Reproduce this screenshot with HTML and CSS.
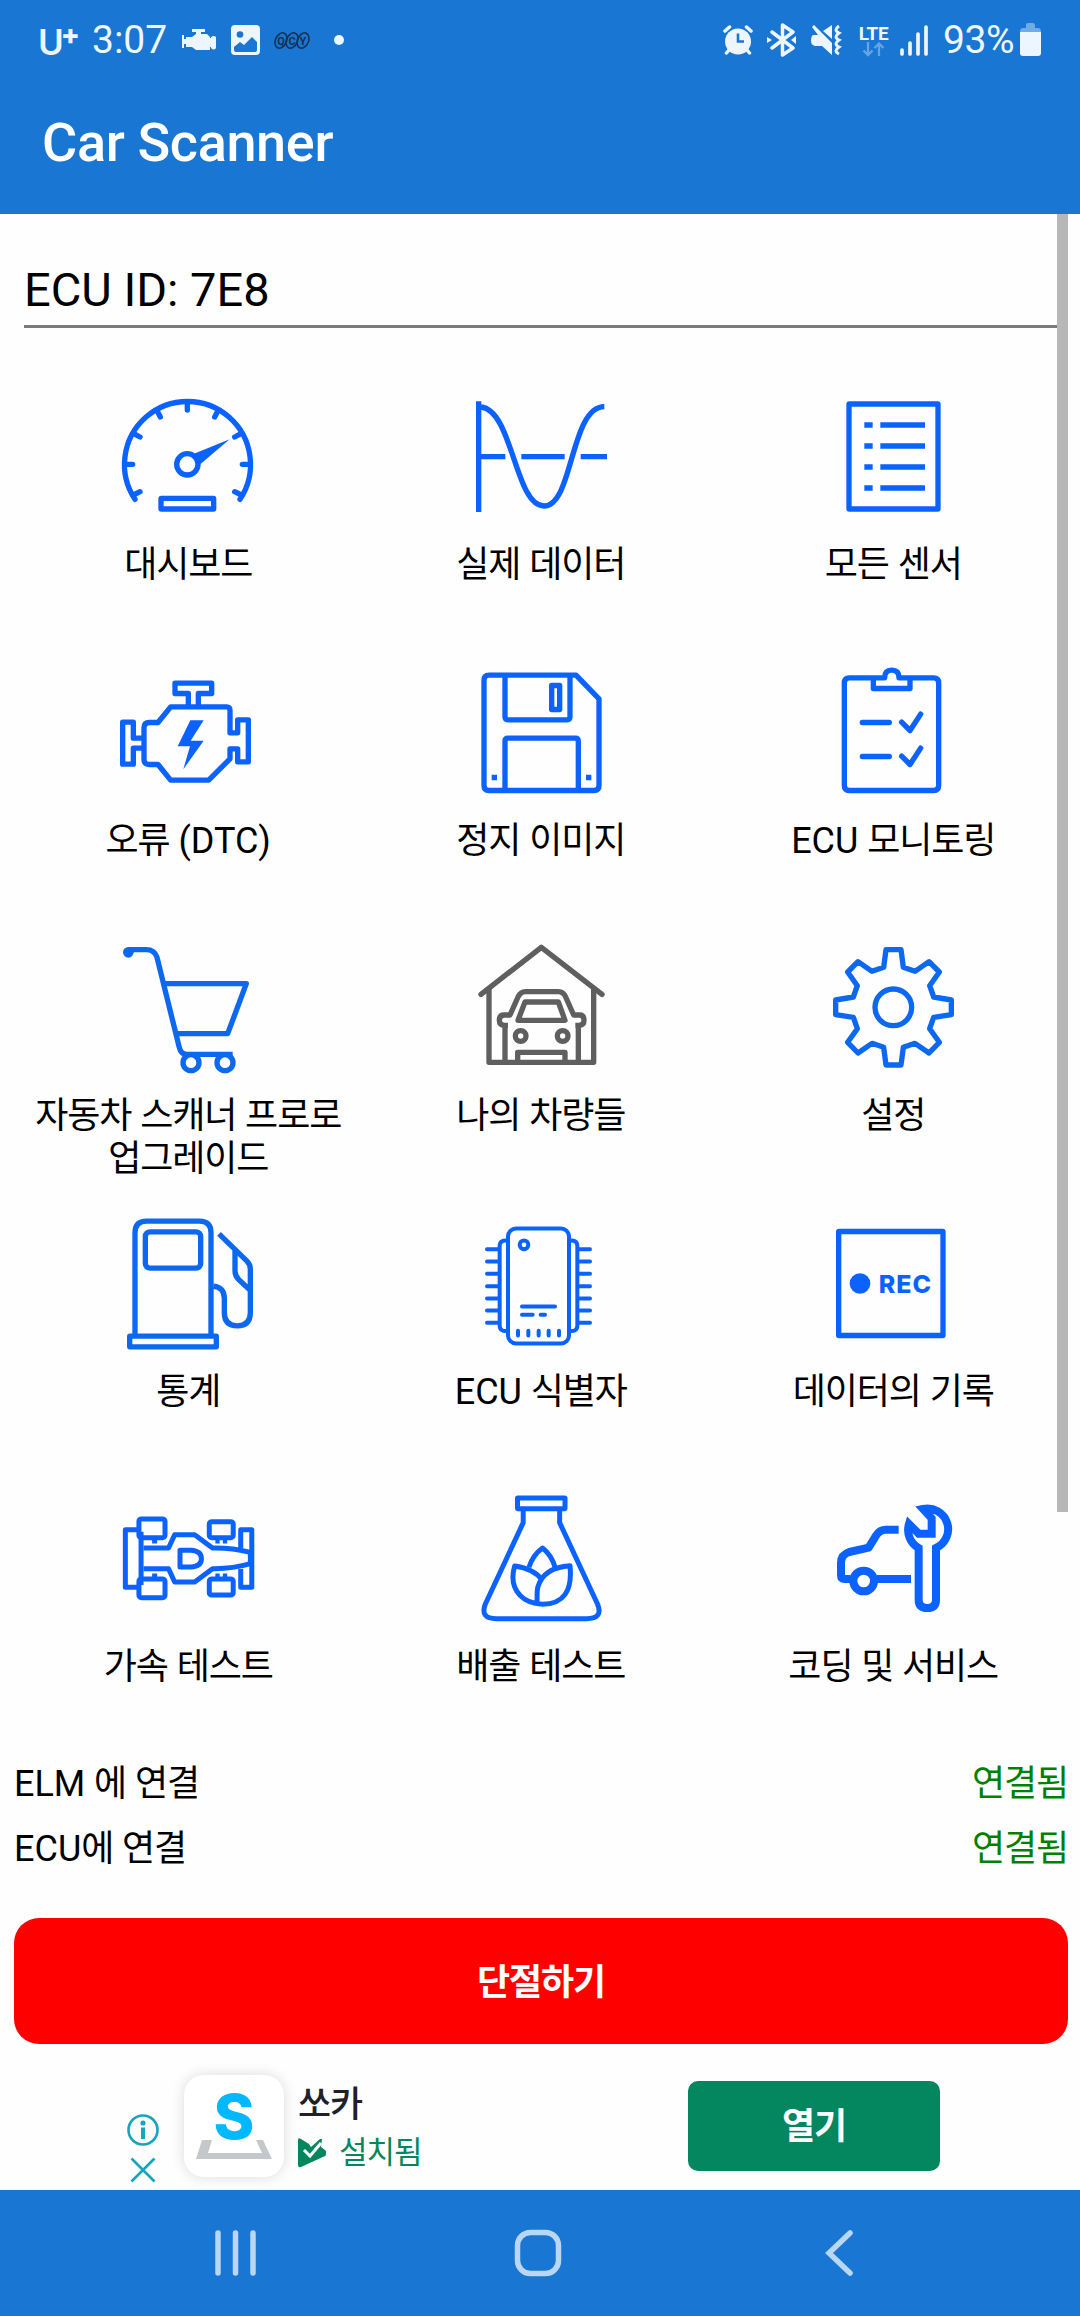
FILE: index.html
```html
<!DOCTYPE html>
<html lang="ko">
<head>
  <meta charset="UTF-8">
  <title>Car Scanner</title>
  <link rel="stylesheet" href="styles.css">
</head>
<body>
  <header class="app-header">
    <!-- status bar -->
    <div class="status-bar">
      <div class="status-left">
        <span class="carrier">U<sup>+</sup></span>
        <span class="clock">3:07</span>
        <svg class="st-engine" width="34" height="22" viewBox="0 0 34 22"><path fill="currentColor" d="M10 0h13v3h-4v2h6l3 3v1h1V8q3-2 5 0v11q-2 3-5 0v-1h-1v3H14l-4-3H4v-3H2v4H0V6h2v4h2V8h6l4-3V3h-4z"/></svg>
        <svg class="st-photo" width="29" height="30" viewBox="0 0 29 30"><rect width="29" height="30" rx="4" fill="currentColor"/><circle cx="9" cy="9.500" r="3.300" fill="#1976d2"/><path fill="#1976d2" d="M3 22l6-5 4 3 8-8 5 5v8q0 2-2 2H5q-2 0-2-2z"/></svg>
        <svg class="st-qcy" width="36" height="17" viewBox="0 0 36 17"><g fill="none" stroke="#14304f" stroke-width="1.500"><ellipse cx="7" cy="8.500" rx="5.500" ry="8" transform="rotate(25 7 8.500)"/><ellipse cx="18" cy="8.500" rx="5.500" ry="8" transform="rotate(25 18 8.500)"/><ellipse cx="29" cy="8.500" rx="5.500" ry="8" transform="rotate(25 29 8.500)"/></g><g class="qcy-text"><text x="7" y="12.500">Q</text><text x="18" y="12.500">C</text><text x="29" y="12.500">Y</text></g></svg>
        <span class="st-dot"></span>
      </div>
      <div class="status-right">
        <svg width="30" height="30" viewBox="0 0 30 30"><circle cx="15" cy="16.500" r="13" fill="currentColor"/><path d="M2 6l4.500-4M28 6l-4.500-4M6 25l-2.500 3M24 25l2.500 3" stroke="currentColor" stroke-width="3.500" stroke-linecap="round"/><path d="M15 8.500v8h6" fill="none" stroke="#1976d2" stroke-width="2.600"/></svg>
        <svg class="st-bt" width="30" height="34" viewBox="0 0 30 34"><path d="M5 9l21 16-10.500 7V2L26 9 5 25" fill="none" stroke="currentColor" stroke-width="3.500" stroke-linejoin="round" stroke-linecap="round"/><path fill="currentColor" d="M0 14l5 3-5 3zM29 13v8l-5-4z"/></svg>
        <svg class="st-mute" width="31" height="31" viewBox="0 0 31 31"><path fill="currentColor" d="M2 10h5L1 2 3 0l18 18v12l-10-9H4q-4-1-4-5 0-5 2-6zM12 6l9-6v14z"/><path d="M28 1q-6 4 0 7-6 4 0 7-6 4 0 7-6 4 0 7" fill="none" stroke="currentColor" stroke-width="3"/></svg>
        <div class="lte"><span>LTE</span><svg width="24" height="15" viewBox="0 0 24 15"><path d="M6 0v13M1.500 8.500L6 13l4.500-4.500M17 14V1.500M12.500 6L17 1.500 21.500 6" fill="none" stroke="#66a5e3" stroke-width="2.300"/></svg></div>
        <svg class="st-signal" width="28" height="31" viewBox="0 0 28 31"><path d="M2 25v4M10 18v11M18 9v20M26 2v27" stroke="currentColor" stroke-width="3.700" stroke-linecap="round"/></svg>
        <span class="battery-text">93%</span>
        <svg class="st-battery" width="21" height="34" viewBox="0 0 21 34"><path fill="#71abe5" d="M6 2q0-2 2-2h5q2 0 2 2v3h3q3 0 3 4H0q0-4 3-4h3z"/><path fill="currentColor" d="M0 9h21v21q0 3-3 3H3q-3 0-3-3z"/></svg>
      </div>
    </div>
    <h1>Car Scanner</h1>
  </header>

  <main>
    <div class="scrollbar"></div>
    <div class="ecu-picker">ECU ID: 7E8</div>

    <div class="menu">
      <div class="menu-item">
        <svg class="icon" viewBox="348 48 432 432">
          <path d="M405 388A189 189 0 1 1 720 388" stroke-linecap="round"/>
          <path d="M562 100v20M472 124l9 17M653 124l-9 17M400 190l20 11M724 190l-20 11M380 283h18M745 283h-18M400 375l20-10M724 375l-20-10" stroke-linecap="round"/>
          <circle cx="562" cy="283" r="32"/>
          <path class="solid" d="M582 251L689 208 598 285z"/>
          <rect x="483" y="385" width="158" height="32" rx="1"/>
        </svg>
        <p>대시보드</p>
      </div>
      <div class="menu-item">
        <svg class="icon" viewBox="207 48 432 432">
          <path d="M236 94v332M244 260h72M364 260h130M542 260h79"/>
          <path d="M243 111C338 120 345 408 432 408 520 408 510 111 613 110"/>
        </svg>
        <p>실제 데이터</p>
      </div>
      <div class="menu-item">
        <svg class="icon" viewBox="243 48 432 432">
          <rect x="327" y="102" width="267" height="315" rx="1"/>
          <path d="M373 165h25M421 165h134M373 228h25M421 228h134M373 291h25M421 291h134M373 354h25M421 354h134"/>
        </svg>
        <p>모든 센서</p>
      </div>

      <div class="menu-item">
        <svg class="icon" viewBox="348 874.5 432 432">
          <path d="M565 1008v-39h-40v-31h110v31h-40v39"/>
          <path d="M512 1009h168q10 0 10 10v68h23v-39h32v126h-32v-39h-23v30l-64 64H512l-38-47h-26q-16 0-16-16v-94q0-16 16-16h26z"/>
          <path d="M432 1103h-32v-48h-32v126h32v-48h32"/>
          <path class="solid" d="M571 1049h40l-39 62h39l-61 85 20-69h-37z"/>
        </svg>
        <p>오류 <span class="latin">(DTC)</span></p>
      </div>
      <div class="menu-item">
        <svg class="icon" viewBox="207 874.5 432 432">
          <path d="M267 914h261l69 71v260q0 15-15 15H267q-15 0-15-15V929q0-15 15-15z"/>
          <path d="M315 914v125q0 9 9 9h177q9 0 9-9V914M315 1260v-148q0-9 9-9h202q9 0 9 9v148"/>
          <rect x="455" y="945" width="24" height="72"/>
          <path d="M275 1221h16M558 1221h16"/>
        </svg>
        <p>정지 이미지</p>
      </div>
      <div class="menu-item">
        <svg class="icon" viewBox="243 874.5 432 432">
          <path d="M434 922H328q-15 0-15 15v308q0 15 15 15h253q15 0 15-15V937q0-15-15-15H477q0-23-22-23-21 0-21 23z"/>
          <path d="M400 922v32h110v-32"/>
          <path d="M367 1056h81M367 1158h81M485 1055l25 25 32-49M485 1157l25 25 32-49" stroke-linecap="round"/>
        </svg>
        <p><span class="latin">ECU</span> 모니토링</p>
      </div>

      <div class="menu-item">
        <svg class="icon icon-alt" viewBox="348 51 432 432">
          <circle class="solid" cx="385" cy="97" r="16"/>
          <path d="M385 89h53q26 0 33 23l67 271q5 20 22 20h138" />
          <path d="M494 191h245l-56 150H530"/>
          <circle cx="573" cy="428" r="24"/><circle cx="675" cy="428" r="24"/>
        </svg>
        <p>자동차 스캐너 프로로<br>업그레이드</p>
      </div>
      <div class="menu-item">
        <svg class="icon icon-gray" viewBox="207 51 432 432">
          <path d="M243 223L424 82l182 141" stroke-linecap="round"/>
          <path d="M267 207v220h314V207"/>
          <path d="M315 420V317M535 420V317M324 316h-10q-16 0-16-15 0-16 14-16h18l24-54q8-16 22-16h99q15 0 22 16l24 54h18q13 0 13 16 0 15-16 15h-10"/>
          <path d="M375 246h100l20 55H354z"/>
          <circle cx="362" cy="348" r="16"/><circle cx="488" cy="348" r="16"/>
          <path d="M353 424v-27h142v27"/>
        </svg>
        <p>나의 차량들</p>
      </div>
      <div class="menu-item">
        <svg class="icon icon-alt" viewBox="243 51 432 432">
          <path d="M438 89h45l7 53 35 12 42-29 31 31-29 41 12 34 53 9v44l-53 8-12 34 29 41-31 32-42-29-35 12-7 53h-45l-7-53-35-12-42 29-31-32 29-41-12-34-53-8v-44l53-9 12-34-29-41 31-31 42 29 35-12z"/>
          <circle cx="460" cy="262" r="55"/>
        </svg>
        <p>설정</p>
      </div>

      <div class="menu-item">
        <svg class="icon icon-alt" viewBox="348 877.5 432 432">
          <path d="M405 1247V937q0-35 35-35h158q35 0 35 35v310"/>
          <rect x="436" y="934" width="166" height="109" rx="14"/>
          <rect x="389" y="1247" width="260" height="32" rx="1"/>
          <path d="M657 940l84 82q10 9 10 24v131q0 39-39 39t-39-39v-44q0-32-33-36M705 987v64q0 16 11 26l34 32"/>
        </svg>
        <p>통계</p>
      </div>
      <div class="menu-item">
        <svg class="icon icon-thin" viewBox="207 877.5 432 432">
          <rect x="324" y="924" width="183" height="345" rx="24"/>
          <path d="M324 961q-25-4-25 16v238q0 20 25 16M507 961q25-4 25 16v238q0 20-25 16"/>
          <g stroke-linecap="round">
            <path d="M261 986h34M261 1023h34M261 1060h34M261 1097h34M261 1134h34M261 1170h34M261 1207h34"/>
            <path d="M536 986h34M536 1023h34M536 1060h34M536 1097h34M536 1134h34M536 1170h34M536 1207h34"/>
            <path d="M366 1158h99M366 1183h32M422 1183h13M354 1231v14M385 1231v14M416 1231v14M446 1231v14M477 1231v14"/>
          </g>
          <circle cx="372" cy="973" r="13"/>
        </svg>
        <p><span class="latin">ECU</span> 식별자</p>
      </div>
      <div class="menu-item">
        <svg class="icon" viewBox="243 877.5 432 432">
          <rect x="296" y="933" width="313" height="312" rx="1"/>
          <circle class="solid" cx="360" cy="1089" r="31"/>
          <text class="rec" x="416" y="1116">REC</text>
        </svg>
        <p>데이터의 기록</p>
      </div>

      <div class="menu-item">
        <svg class="icon icon-wide" viewBox="100.8 54 403.2 432" preserveAspectRatio="none">
          <path d="M170 179h-43v173h43M171 185v160"/>
          <rect x="165" y="147" width="73" height="56" rx="7"/><rect x="165" y="327" width="73" height="56" rx="7"/>
          <rect x="362" y="155" width="67" height="48" rx="7"/><rect x="362" y="327" width="67" height="48" rx="7"/>
          <path d="M178 234h70l17-40h56l50 40q55-1 106 13v34q-51 16-106 15l-50 40h-56l-17-40h-70"/>
          <path d="M450 234v-55h31v173h-31v-55"/>
          <path d="M280 241h30q30 2 30 25t-30 25h-30z"/>
          <path d="M202 213h14M379 213h12M400 213h12M202 318h14M379 318h12M400 318h12"/>
        </svg>
        <p>가속 테스트</p>
      </div>
      <div class="menu-item">
        <svg class="icon icon-wide" viewBox="1089.2 54 403.2 432" preserveAspectRatio="none">
          <rect x="1225" y="84" width="133" height="32" rx="1"/>
          <path d="M1241 116v42l-106 244q-16 44 31 44h252q48 0 31-44L1343 158v-42"/>
          <path d="M1257 292q11-37 38-58 26 22 35 58"/>
          <path d="M1294 330q-23-34-77-42-15 55 16 89 20 23 62 26 88-2 77-116-75 6-90 64-3 12-2 49"/>
        </svg>
        <p>배출 테스트</p>
      </div>
      <div class="menu-item">
        <svg class="icon icon-bold" viewBox="243 54 432 432">
          <path d="M476 179h-38q-20 0-30 18l-22 36-58 13q-25 8-25 32v38q0 11 11 11h18M411 327h102"/>
          <circle cx="371" cy="333" r="31"/>
          <path class="wrench" d="M536 234v155q0 25 26 25t26-25V234A62 62 0 0 0 549 117L575 145V191H536L507 162A62 62 0 0 0 536 234z"/>
        </svg>
        <p>코딩 및 서비스</p>
      </div>
    </div>

    <!-- connection state -->
    <div class="connection">
      <div class="connection-row"><span><span class="latin">ELM</span> 에 연결</span><span class="ok">연결됨</span></div>
      <div class="connection-row"><span><span class="latin">ECU</span>에 연결</span><span class="ok">연결됨</span></div>
    </div>
    <button class="disconnect">단절하기</button>

    <!-- banner -->
    <div class="banner">
      <div class="ad-choices">
        <svg width="32" height="32" viewBox="0 0 32 32"><circle cx="16" cy="16" r="14.500"/><path d="M16 13.500V25" stroke-width="4"/><circle class="ad-dot" cx="16" cy="9" r="2.600"/></svg>
        <svg width="32" height="26" viewBox="0 0 32 26"><path d="M4.500 1.500l23 23M27.500 1.500l-23 23"/></svg>
      </div>
      <div class="ad-logo">
        <svg width="100" height="102" viewBox="0 0 100 102"><path fill="#c5c8cb" d="M18 65h10l-4 13h54l-6-13h7l9 19H12z"/><text class="ad-s" x="50" y="64">S</text></svg>
      </div>
      <div class="ad-text">
        <div class="ad-title">쏘카</div>
        <div class="ad-installed">
          <svg width="28" height="30" viewBox="0 0 28 30"><path fill="#04875f" d="M0 2q0-3 3-1l8 5 2 3 9-8h2l-1 8 4 3q3 3 0 6L3 29q-3 1-3-2z"/><path d="M6 12l6 6L23 5" fill="none" stroke="#fff" stroke-width="3"/></svg>
          <span>설치됨</span>
        </div>
      </div>
      <button class="ad-open">열기</button>
    </div>
  </main>

  <nav class="nav-bar">
    <svg class="nav-recent" width="41" height="46" viewBox="0 0 41 46"><path d="M3 3v40M20.500 3v40M38 3v40"/></svg>
    <svg class="nav-home" width="48" height="48" viewBox="0 0 48 48"><rect x="3.500" y="3.500" width="41" height="41" rx="13"/></svg>
    <svg class="nav-back" width="30" height="48" viewBox="0 0 30 48"><path d="M26 4L5 24l21 20"/></svg>
  </nav>
</body>
</html>
```
FILE: styles.css
```css
* {
  box-sizing: border-box;
}
body {
  margin: 0;
  width: 1080px;
  height: 2316px;
  display: flex;
  flex-direction: column;
  background: #fefefe;
  color: #000;
  font-family: Roboto, "Noto Sans CJK KR", sans-serif;
  overflow: hidden;
}
.app-header {
  height: 214px;
  background: #1976d2;
  color: #fff;
}
.app-header h1 {
  margin: 33px 0 0 42px;
  font-size: 54px;
  font-weight: 500;
  line-height: 64px;
  letter-spacing: -0.35px;
}

/* status bar */
.status-bar {
  height: 78px;
  display: flex;
  justify-content: space-between;
  padding: 2px 39px 0 38px;
  color: #edf6ff;
}
.status-left,
.status-right {
  display: flex;
  align-items: center;
}
.carrier {
  width: 54px;
  padding-top: 3px;
  font: 600 35px/40px Inter, sans-serif;
  white-space: nowrap;
}
.carrier sup {
  font-size: 28px;
  font-weight: 800;
  line-height: 0;
  vertical-align: 10px;
  margin-left: -3px;
}
.clock {
  width: 90px;
  font-size: 39px;
}
.st-photo {
  margin-left: 15px;
}
.st-qcy {
  margin-left: 14px;
}
.qcy-text {
  font-size: 11px;
  font-weight: 700;
  text-anchor: middle;
  fill: #14304f;
}
.st-dot {
  width: 10px;
  height: 10px;
  margin-left: 24px;
  border-radius: 50%;
  background: #edf6ff;
}
.st-bt {
  margin-left: 14px;
}
.st-mute {
  margin-left: 14px;
}
.lte {
  width: 33px;
  margin-left: 15px;
  display: flex;
  flex-direction: column;
  align-items: center;
  padding-top: 2px;
}
.lte span {
  font-size: 19px;
  font-weight: 700;
  line-height: 15px;
  letter-spacing: -0.3px;
  margin-bottom: 1px;
}
.st-signal {
  margin-left: 10px;
}
.battery-text {
  width: 77px;
  margin-left: 15px;
  font-size: 39px;
  letter-spacing: -0.4px;
}

/* content */
main {
  position: relative;
  height: 1976px;
}
.scrollbar {
  position: absolute;
  top: 0;
  right: 12px;
  width: 11px;
  height: 1298px;
  background: #b7b7b7;
}
.ecu-picker {
  height: 114px;
  margin: 0 22px 0 24px;
  padding-top: 47px;
  border-bottom: 3px solid #7b7b7b;
  font-size: 47px;
  line-height: 58px;
}
.menu {
  display: grid;
  grid-template-columns: repeat(3, 352.5px);
  grid-auto-rows: 275.5px;
  padding: 58px 0 0 12px;
}
.menu-item {
  text-align: center;
}
.menu-item p {
  margin: 14px 0 0;
  font-size: 36px;
  line-height: 43px;
  letter-spacing: -1.1px;
  word-spacing: 1px;
  white-space: nowrap;
}
.latin {
  letter-spacing: 0;
}
.icon {
  display: block;
  width: 144px;
  height: 144px;
  margin: 0 auto;
  fill: none;
  stroke: #0b62ff;
  stroke-width: 16;
  stroke-linejoin: round;
}
.icon .solid {
  fill: #0b62ff;
  stroke: none;
}
.icon-alt {
  stroke: #0d68f0;
}
.icon-alt .solid {
  fill: #0d68f0;
}
.icon-gray {
  stroke: #5f5f5f;
}
.icon-thin {
  stroke-width: 12;
}
.icon-bold {
  stroke-width: 24;
}
.icon .wrench {
  stroke-linejoin: miter;
}
.icon-wide * {
  stroke-width: 5px;
  vector-effect: non-scaling-stroke;
}
.icon .rec {
  font: 800 75px Inter, sans-serif;
  letter-spacing: 3px;
  fill: #0b62ff;
  stroke: none;
}

/* connection */
.connection {
  display: flex;
  flex-direction: column;
  gap: 25px;
  padding: 0 12px 0 14px;
}
.connection-row {
  display: flex;
  justify-content: space-between;
  font-size: 36px;
  line-height: 40px;
  letter-spacing: -1.1px;
  word-spacing: 1px;
}
.ok {
  color: #008000;
}
.disconnect {
  display: block;
  width: 1054px;
  height: 126px;
  margin: 49px 0 0 14px;
  padding: 0 0 4px;
  border: none;
  border-radius: 25px;
  background: #f00;
  color: #fff;
  font-family: inherit;
  font-size: 36px;
  font-weight: 700;
  letter-spacing: -1.1px;
}

/* banner */
.banner {
  display: flex;
  height: 146px;
  padding: 31px 0 0 127px;
}
.ad-choices {
  display: flex;
  flex-direction: column;
  gap: 11px;
  padding-top: 39px;
}
.ad-choices svg {
  fill: none;
  stroke: #16a5bd;
  stroke-width: 2.6;
}
.ad-choices .ad-dot {
  fill: #16a5bd;
  stroke: none;
}
.ad-logo {
  width: 100px;
  height: 102px;
  margin-left: 25px;
  border-radius: 20px;
  background: #fff;
  box-shadow: 0 0 14px rgba(0, 0, 0, 0.14);
}
.ad-s {
  font: 800 62px Inter, sans-serif;
  text-anchor: middle;
  fill: #00b8ff;
}
.ad-text {
  width: 390px;
  margin-left: 14px;
  padding-top: 8px;
}
.ad-title {
  color: #202124;
  font-size: 36px;
  font-weight: 500;
  line-height: 44px;
  letter-spacing: -1.1px;
}
.ad-installed {
  display: flex;
  align-items: center;
  gap: 13px;
  margin-top: 4px;
  color: #04875f;
  font-size: 31px;
  line-height: 44px;
  letter-spacing: -1px;
}
.ad-open {
  width: 252px;
  height: 90px;
  margin-top: 6px;
  padding: 0 0 5px;
  border: none;
  border-radius: 10px;
  background: #04875f;
  color: #fff;
  font-family: inherit;
  font-size: 36px;
  font-weight: 700;
  letter-spacing: -1px;
}

/* navigation */
.nav-bar {
  height: 126px;
  display: flex;
  align-items: center;
  background: #1976d2;
}
.nav-bar svg {
  fill: none;
  stroke: #b9d6f3;
  stroke-width: 5.5;
  stroke-linecap: round;
}
.nav-recent {
  margin-left: 215px;
}
.nav-home {
  margin-left: 258px;
}
.nav-back {
  margin-left: 262px;
}
```
